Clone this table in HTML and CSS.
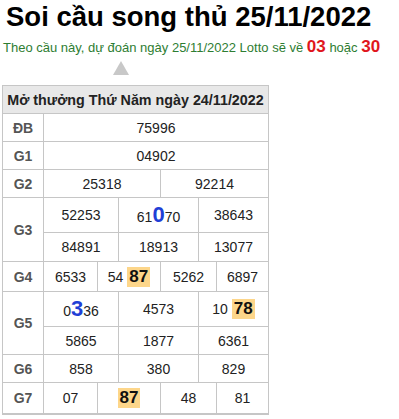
FILE: index.html
```html
<!DOCTYPE html>
<html lang="vi">
<head>
<meta charset="utf-8">
<title>Soi cầu song thủ 25/11/2022</title>
<link rel="stylesheet" href="styles.css">
</head>
<body>
<h1 class="title">Soi cầu song thủ 25/11/2022</h1>
<p class="predict">Theo cầu này, dự đoán ngày 25/11/2022 Lotto sẽ về <b class="num">03</b> hoặc <b class="num">30</b></p>
<div class="arrow-row"><span class="arrow"></span></div>
<table class="kq">
  <colgroup>
    <col class="c1"><col class="c2"><col class="c3"><col class="c4"><col class="c5"><col class="c6"><col class="c7">
  </colgroup>
  <tr class="h28"><th colspan="7" class="head">Mở thưởng Thứ Năm ngày 24/11/2022</th></tr>
  <tr class="h28"><td class="lbl">ĐB</td><td colspan="6">75996</td></tr>
  <tr class="h28"><td class="lbl">G1</td><td colspan="6">04902</td></tr>
  <tr class="h28"><td class="lbl">G2</td><td colspan="3">25318</td><td colspan="3">92214</td></tr>
  <tr class="h35"><td class="lbl" rowspan="2">G3</td><td colspan="2">52253</td><td colspan="2">61<span class="hit">0</span>70</td><td colspan="2">38643</td></tr>
  <tr class="h29"><td colspan="2">84891</td><td colspan="2">18913</td><td colspan="2">13077</td></tr>
  <tr class="h30"><td class="lbl">G4</td><td>6533</td><td colspan="2">54 <span class="mark">87</span></td><td colspan="2">5262</td><td>6897</td></tr>
  <tr class="h35"><td class="lbl" rowspan="2">G5</td><td colspan="2">0<span class="hit">3</span>36</td><td colspan="2">4573</td><td colspan="2">10 <span class="mark">78</span></td></tr>
  <tr class="h28"><td colspan="2">5865</td><td colspan="2">1877</td><td colspan="2">6361</td></tr>
  <tr class="h28"><td class="lbl">G6</td><td colspan="2">858</td><td colspan="2">380</td><td colspan="2">829</td></tr>
  <tr class="h31"><td class="lbl">G7</td><td>07</td><td colspan="2"><span class="mark">87</span></td><td colspan="2">48</td><td>81</td></tr>
</table>
</body>
</html>
```

FILE: styles.css
```css
html, body {
  margin: 0;
  padding: 0;
  background: #fff;
}
body {
  font-family: "Liberation Sans", Arial, sans-serif;
  color: #222;
  padding: 0 2px;
}
.title {
  margin: 0;
  padding: 0 0 0 4px;
  font-size: 27.5px;
  line-height: 34px;
  font-weight: bold;
  color: #000;
}
.predict {
  margin: 4px 0 0 0;
  padding-left: 1px;
  font-size: 13px;
  line-height: 18px;
  color: #2e7d32;
}
.predict .num {
  color: #e0161c;
  font-size: 17px;
}
.arrow-row {
  height: 28px;
  padding-left: 111px;
  padding-top: 4px;
  box-sizing: border-box;
}
.arrow {
  display: block;
  width: 0;
  height: 0;
  border-left: 8px solid transparent;
  border-right: 8px solid transparent;
  border-bottom: 14px solid #c8c8c8;
}
.kq {
  border-collapse: collapse;
  table-layout: fixed;
  width: 266px;
  font-size: 14px;
  border: 1px solid #c6c6c6;
  border-bottom-width: 2px;
}
.kq th, .kq td {
  border: 1px solid #c6c6c6;
  padding: 0;
  text-align: center;
  vertical-align: middle;
  color: #222;
}
.c1 { width: 41px; }
.c2 { width: 54px; }
.c3 { width: 21px; }
.c4 { width: 42px; }
.c5 { width: 38px; }
.c6 { width: 18px; }
.c7 { width: 52px; }
.head {
  background: #e8e8e8;
  font-weight: bold;
  font-size: 14.3px;
  color: #222;
  white-space: nowrap;
}
.kq td.lbl {
  font-weight: bold;
  color: #555;
  font-size: 14px;
}
.h28 { height: 28px; }
.h29 { height: 29px; }
.h30 { height: 30px; }
.h31 { height: 31px; }
.h35 { height: 35px; }
.hit {
  color: #1f3fd6;
  font-weight: bold;
  font-size: 22px;
}
.mark {
  display: inline-block;
  background: #fdd68a;
  color: #111;
  font-weight: bold;
  font-size: 17px;
  line-height: 20px;
  padding: 0 2px;
}
```
